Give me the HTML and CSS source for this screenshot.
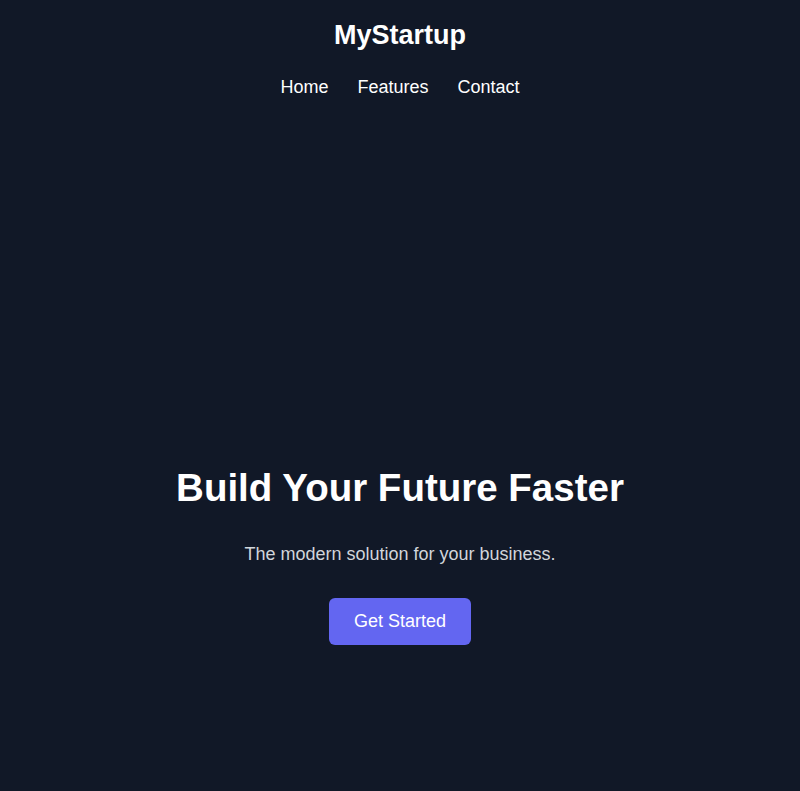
FILE: index.html
```html
<!DOCTYPE html>
<html lang="en">
<head>
<meta charset="utf-8">
<title>MyStartup</title>
<link rel="stylesheet" href="styles.css">
</head>
<body>
<header class="site-header">
  <div class="logo">MyStartup</div>
  <nav class="nav">
    <a href="#">Home</a>
    <a href="#">Features</a>
    <a href="#">Contact</a>
  </nav>
</header>
<section class="hero">
  <h1 class="hero-title">Build Your Future Faster</h1>
  <p class="hero-sub">The modern solution for your business.</p>
  <a class="btn" href="#">Get Started</a>
</section>
</body>
</html>
```
FILE: styles.css
```css
html, body {
  margin: 0;
  padding: 0;
  background: #111827;
  color: #ffffff;
  font-family: "Liberation Sans", Arial, sans-serif;
}
.site-header {
  display: flex;
  flex-direction: column;
  align-items: center;
  padding: 20px 20px 19px;
}
.logo {
  font-size: 27px;
  font-weight: bold;
  line-height: 31px;
}
.nav {
  display: flex;
  gap: 29px;
  margin-top: 26px;
}
.nav a {
  color: #ffffff;
  text-decoration: none;
  font-size: 18px;
  line-height: 21px;
}
.hero {
  display: flex;
  flex-direction: column;
  align-items: center;
  text-align: center;
  padding: 349px 20px 140px;
}
.hero-title {
  margin: 0;
  font-size: 38.5px;
  line-height: 44px;
  font-weight: bold;
}
.hero-sub {
  margin: 34px 0 0;
  font-size: 18px;
  line-height: 21px;
  color: #d1d5db;
}
.btn {
  margin-top: 33px;
  display: inline-block;
  background: #6366f1;
  color: #ffffff;
  text-decoration: none;
  font-size: 18px;
  line-height: 21px;
  padding: 13px 25px;
  border-radius: 6px;
}
```
